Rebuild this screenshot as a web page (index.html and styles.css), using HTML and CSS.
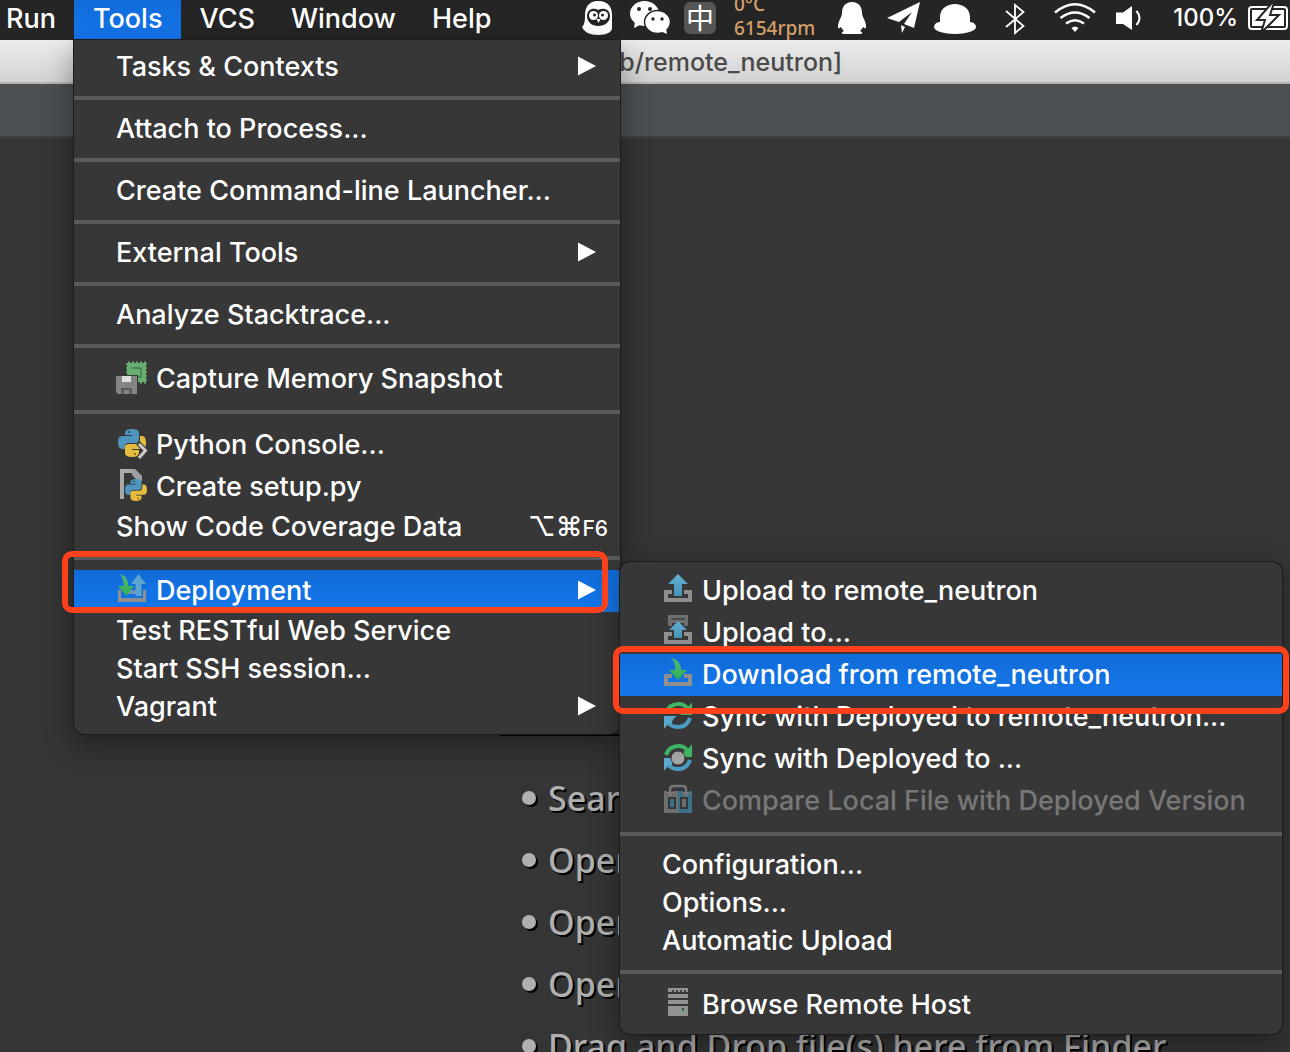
FILE: index.html
```html
<!DOCTYPE html>
<html lang="en">
<head>
<meta charset="utf-8">
<title>remote_neutron</title>
<link rel="stylesheet" href="styles.css">
</head>
<body>
<svg class="defs" aria-hidden="true">
  <defs>
    <linearGradient id="blue" x1="0" y1="0" x2="0" y2="1"><stop offset="0" stop-color="#64b0d2"/><stop offset="1" stop-color="#4592b8"/></linearGradient>
    <linearGradient id="green" x1="0" y1="0" x2="0" y2="1"><stop offset="0" stop-color="#54b878"/><stop offset="1" stop-color="#2faf52"/></linearGradient>
    <symbol id="arrow" viewBox="0 0 18 20"><path d="M0 0.500L18 10L0 19.500Z" fill="#fff"/></symbol>
    <symbol id="tray" viewBox="0 0 32 32"><path d="M2 16H10V20H6V24H26V20H22V16H30V28H2Z" fill="#8f8f8f"/></symbol>
    <symbol id="snake" viewBox="0 0 28 28">
      <path d="M7 4Q7 0 14 0Q21 0 21 4V10Q21 14 17 14H10Q7 14 7 17V20H4Q0 20 0 13Q0 7 4 7H14V6H7Z" fill="#4f94bd"/>
      <path d="M22 7H24Q28 7 28 14Q28 20 24 20H14V21H21V24Q21 28 14 28Q7 28 7 24V18Q7 15 11 15H18Q22 14 22 11Z" fill="#e4bd3e"/>
      <circle cx="11" cy="3" r="1" fill="#24465c"/><circle cx="17" cy="25" r="1" fill="#7a5d10"/>
    </symbol>
    <symbol id="sync" viewBox="0 0 32 32">
      <path d="M4 13Q7 4 17 4Q22 4 25 8" fill="none" stroke="#3fb463" stroke-width="4"/>
      <path d="M30 2V15H18Q22 12 22 9Q27 7 30 2Z" fill="#3fb463"/>
      <path d="M28 18Q25 27 16 27Q11 27 7 24" fill="none" stroke="#4b9cc2" stroke-width="4"/>
      <path d="M2 29V16H15Q10 19 10 23Q5 24 2 29Z" fill="#5aa9cc"/>
    </symbol>
  </defs>
</svg>

<header class="menubar">
  <nav class="menus" aria-label="Application menu">
    <button class="title first">Run</button>
    <div class="menu-root">
      <button class="title active" aria-expanded="true">Tools</button>
      <ul class="menu tools-menu">
        <li><button class="item">Tasks &amp; Contexts<svg class="more"><use href="#arrow"/></svg></button></li>
        <li class="separator"></li>
        <li><button class="item">Attach to Process...</button></li>
        <li class="separator"></li>
        <li><button class="item">Create Command-line Launcher...</button></li>
        <li class="separator"></li>
        <li><button class="item">External Tools<svg class="more"><use href="#arrow"/></svg></button></li>
        <li class="separator"></li>
        <li><button class="item">Analyze Stacktrace...</button></li>
        <li class="separator"></li>
        <li><button class="item with-icon">
          <svg class="icon" viewBox="0 0 32 32"><path d="M11 1H30V20H22V13H11Z" fill="#69ad72"/><path d="M10 2H31M10 6H31M10 10H31M22 14H31M22 18H31" stroke="#69ad72" stroke-width="1.500"/><path d="M12 .500H30M30 20.500H22" stroke="#69ad72" stroke-width="2" stroke-dasharray="2 2"/><path d="M15 6H25V15H22" fill="none" stroke="#3f7f4d" stroke-width="1.500"/><path d="M0 14H21V32H2L0 30Z" fill="#858585"/><path d="M6 14H15V20H6Z" fill="#dedede"/><path d="M5 26H16V32H5Z" fill="#5b5b5b"/><path d="M8 28H13V32H8Z" fill="#858585"/></svg>
          Capture Memory Snapshot</button></li>
        <li class="separator"></li>
        <li><button class="item with-icon">
          <svg class="icon" viewBox="0 0 32 32"><use href="#snake" x="2" y="1" width="28" height="28"/><path d="M22 15L29 22L23 30" fill="none" stroke="#373737" stroke-width="5"/><path d="M23 16L29.500 22.500L23 30" fill="none" stroke="#cdcdcd" stroke-width="3"/></svg>
          Python Console...</button></li>
        <li><button class="item with-icon">
          <svg class="icon" viewBox="0 0 32 32"><path d="M4 -1H18V3H8V29H4Z" fill="#a9a9a9"/><path d="M16 -1H19L26 6V11H22L16 5Z" fill="#a0a0a0"/><use href="#snake" x="9" y="9" width="22" height="22"/></svg>
          Create setup.py</button></li>
        <li><button class="item">Show Code Coverage Data<span class="shortcut">⌥⌘<small>F6</small></span></button></li>
        <li class="separator"></li>
        <li class="has-submenu marked mark-parent">
          <button class="item with-icon selected" aria-expanded="true">
            <svg class="icon" viewBox="0 0 32 32"><path d="M2 16H5V24H27V16H30V28H2Z" fill="#8f8f8f"/><path d="M11 18H22" stroke="#7094b8" stroke-width="4"/><path d="M22.500 0L30 10H25.500V22H19.500V10H15Z" fill="#5ba5cf"/><path d="M4 0Q12 2 12.500 12H18L10.500 22L2 12H7.500Q8 5 4 0Z" fill="url(#green)"/></svg>
            Deployment<svg class="more"><use href="#arrow"/></svg></button>
          <ul class="menu submenu">
            <li><button class="item with-icon">
              <svg class="icon" viewBox="0 0 32 32"><use href="#tray"/><path d="M16 0L26 10H20V22H12V10H6Z" fill="url(#blue)"/></svg>
              Upload to remote_neutron</button></li>
            <li><button class="item with-icon">
              <svg class="icon" viewBox="0 0 32 32"><path d="M6 -1H26V10H22V7H10V10H6Z" fill="#6f6f6f"/><path d="M9 3H23" stroke="#4b4b4b" stroke-width="2"/><use href="#tray"/><path d="M16 5L25 14H20V22H12V14H7Z" fill="url(#blue)"/></svg>
              Upload to...</button></li>
            <li class="marked mark-child"><button class="item with-icon selected">
              <svg class="icon" viewBox="0 0 32 32"><use href="#tray"/><path d="M9 0Q19 2 19 12H25L16 22L7 12H13Q14 5 9 0Z" fill="url(#green)"/></svg>
              Download from remote_neutron</button></li>
            <li><button class="item with-icon">
              <svg class="icon" viewBox="0 0 32 32"><use href="#sync"/></svg>
              Sync with Deployed to remote_neutron...</button></li>
            <li><button class="item with-icon">
              <svg class="icon" viewBox="0 0 32 32"><use href="#sync"/><circle cx="16" cy="16" r="7" fill="#a3a3a3" stroke="#373737"/></svg>
              Sync with Deployed to ...</button></li>
            <li><button class="item with-icon" disabled>
              <svg class="icon" viewBox="0 0 32 32"><path d="M2 7H16V29H2Z" fill="#6f6f6f"/><path d="M16 7H30V29H16Z" fill="#3d7188"/><path d="M6 13H14V25H6ZM18 13H26V25H18Z" fill="#373737"/><path d="M8 15H12V23H8Z" fill="#3d7188"/><path d="M20 15H24V23H20Z" fill="#6f6f6f"/><path d="M8 11V5Q8 2 12 2H20Q24 2 24 5V11" fill="none" stroke="#373737" stroke-width="6"/><path d="M8 10V5Q8 2 12 2H20Q24 2 24 5V10" fill="none" stroke="#777" stroke-width="2.500"/><path d="M3 8H13L8 13ZM19 8H29L24 13Z" fill="#777"/></svg>
              Compare Local File with Deployed Version</button></li>
            <li class="separator"></li>
            <li><button class="item">Configuration...</button></li>
            <li><button class="item">Options...</button></li>
            <li><button class="item">Automatic Upload</button></li>
            <li class="separator"></li>
            <li><button class="item with-icon">
              <svg class="icon" viewBox="0 0 32 32"><path d="M6 0H26V4H6ZM6 6H26V10H6ZM6 12H26V16H6ZM6 18H26V28H6Z" fill="#929292"/><path d="M10 3H24" stroke="#444" stroke-width="2" stroke-dasharray="2 2"/><path d="M20 20H22V22H20Z" fill="#444"/><path d="M20 22H22V24H20Z" fill="#22b84c"/></svg>
              Browse Remote Host</button></li>
          </ul>
        </li>
        <li><button class="item">Test RESTful Web Service</button></li>
        <li><button class="item">Start SSH session...</button></li>
        <li><button class="item">Vagrant<svg class="more"><use href="#arrow"/></svg></button></li>
      </ul>
    </div>
    <button class="title">VCS</button>
    <button class="title">Window</button>
    <button class="title">Help</button>
  </nav>
  <div class="status">
    <svg width="46" height="40" viewBox="576 0 46 40"><path d="M598 1C588 1 585 8 585 16C585 22 584 25 582 27C584 32 590 35 598 35C607 35 612 32 612 28V15C612 7 608 1 598 1Z" fill="#fff"/><path d="M598 10C594 7 587 9 587 16C587 22 592 26 598 26C605 26 610 22 610 16C610 9 603 7 598 10Z" fill="#222"/><circle cx="593.500" cy="15.500" r="4.500" fill="#fff"/><circle cx="603.500" cy="15.500" r="4.500" fill="#fff"/><circle cx="594.500" cy="15" r="1.500" fill="#222"/><circle cx="602.500" cy="15" r="1.500" fill="#222"/><path d="M596.500 19H600.500L598.500 23Z" fill="#fff"/></svg>
    <svg width="54" height="40" viewBox="622 0 54 40"><ellipse cx="644.500" cy="13.500" rx="14.500" ry="12.500" fill="#fff"/><path d="M635 22L634 28L642 24Z" fill="#fff"/><ellipse cx="657.500" cy="22" rx="13" ry="11.500" fill="#fff" stroke="#252525" stroke-width="1.500"/><path d="M660 31L667 34L666 28Z" fill="#fff"/><g fill="#252525"><circle cx="639" cy="9" r="2"/><circle cx="650" cy="9" r="2"/><circle cx="653" cy="19" r="1.700"/><circle cx="662" cy="19" r="1.700"/></g></svg>
    <span class="input-method">中</span>
    <span class="sensors">0°C<br>6154rpm</span>
    <svg width="50" height="40" viewBox="826 0 50 40"><path d="M852 2C845 2 842 7 842 13C842 17 838 21 838 26C838 29 839 29 841 27C842 29 843 30 844 31C841 32 841 34 844 34H860C863 34 863 32 860 31C861 30 862 29 863 27C865 29 866 29 866 26C866 21 862 17 862 13C862 7 859 2 852 2Z" fill="#fff"/></svg>
    <svg width="50" height="40" viewBox="876 0 50 40"><path d="M887 18L920 2L914 28L904 24L912 12L899 22ZM901 25L905 27L902 33Z" fill="#fff"/></svg>
    <svg width="60" height="40" viewBox="926 0 60 40"><path d="M940 22V17C940 9 947 4 955 4C963 4 970 9 970 17V22C974 22 976 25 976 27C976 31 966 34 955 34C944 34 934 31 934 27C934 25 936 22 940 22Z" fill="#fff"/></svg>
    <svg width="60" height="40" viewBox="986 0 60 40"><path d="M1006 11L1023.500 26L1015 33V5L1023.500 12L1006 27" fill="none" stroke="#fff" stroke-width="1.800"/></svg>
    <svg width="60" height="40" viewBox="1046 0 60 40"><g fill="none" stroke="#fff" stroke-width="2.600"><path d="M1055 12.500Q1075 -4 1095 12.500M1060.500 18Q1075 7 1089.500 18M1066 23.500Q1075 17 1084 23.500"/></g><path d="M1071.500 28Q1075 25 1078.500 28L1075 32Z" fill="#fff"/></svg>
    <svg width="60" height="40" viewBox="1106 0 60 40"><path d="M1116 12.500H1123L1132 6V30L1123 24H1116Z" fill="#fff"/><path d="M1136.500 11Q1142.500 18 1136.500 25" fill="none" stroke="#fff" stroke-width="2"/></svg>
    <span class="charge">100%</span>
    <svg width="44" height="40" viewBox="1246 0 44 40"><rect x="1249" y="7" width="38" height="22" rx="3" fill="none" stroke="#fff" stroke-width="2"/><rect x="1252" y="10" width="32" height="16" fill="#fff"/><path d="M1272 3L1257 20H1265L1261 33L1279 15H1270L1274 3Z" fill="#fff" stroke="#252525" stroke-width="2"/></svg>
  </div>
</header>

<div class="window-title">b/remote_neutron]</div>
<div class="toolbar"></div>
<main class="editor">
  <ul class="hints">
    <li>Search</li>
    <li>Open</li>
    <li>Open</li>
    <li>Open</li>
    <li>Drag and Drop file(s) here from Finder</li>
  </ul>
</main>
</body>
</html>
```

FILE: styles.css
```css
* { box-sizing: border-box; }

body {
  margin: 0;
  height: 100vh;
  display: flex;
  flex-direction: column;
  overflow: hidden;
  background: #353535;
  font-family: Inter, "Liberation Sans", sans-serif;
  font-size: 27px;
  font-weight: 500;
  color: #fff;
}

ul { margin: 0; padding: 0; list-style: none; }

button {
  border: 0;
  margin: 0;
  background: none;
  color: inherit;
  font: inherit;
  white-space: nowrap;
}

.defs { position: absolute; width: 0; height: 0; }

/* Menu bar */
.menubar {
  display: flex;
  flex: none;
  justify-content: space-between;
  height: 40px;
  background: #252525;
}
.menus { display: flex; }
.menu-root { position: relative; }
.title { height: 40px; padding: 0 18px 4px; }
.title.first { padding-left: 6px; }
.title.active { padding: 0 19px 4px; background: linear-gradient(#116bd8, #1477f0); }

.status { display: flex; flex: none; }
.status svg { flex: none; }
.input-method {
  width: 32px;
  height: 32px;
  margin: 2px 8px;
  border-radius: 6px;
  background: #555;
  font: 28px/30px "Noto Sans CJK SC", sans-serif;
  text-align: center;
}
.sensors {
  display: flex;
  flex-direction: column;
  justify-content: flex-end;
  width: 102px;
  height: 40px;
  padding-left: 10px;
  overflow: hidden;
  color: #d3a068;
  font: 500 19px/24px "Noto Sans", sans-serif;
}
.charge { width: 80px; padding-right: 8px; font-size: 24px; line-height: 36px; text-align: right; }

/* Drop-down menus */
.menu {
  position: absolute;
  padding: 8px 0;
  background: #373737;
  box-shadow: 0 0 0 1px #1c1c1c, 0 10px 30px rgba(0, 0, 0, 0.4);
}
.tools-menu { top: 40px; left: 0; width: 546px; border-radius: 0 0 10px 10px; z-index: 1; }
.submenu { top: -8px; left: 100%; width: 662px; border-radius: 10px; }

.item {
  display: flex;
  align-items: center;
  width: 100%;
  height: 38px;
  padding: 0 12px 2px 42px;
  text-align: left;
}
.with-icon { height: 42px; gap: 8px; }
.selected { background: linear-gradient(#116bd8, #1477ea); }
.item:disabled { color: #777; }
.icon { flex: none; width: 32px; height: 32px; overflow: visible; }
.more { width: 18px; height: 20px; margin: 0 12px 0 auto; }
.shortcut { margin-left: auto; font-family: Inter, "DejaVu Sans", sans-serif; }
.shortcut small { font-size: 21px; }
.separator { height: 24px; padding: 10px 0; background: #5a5a5a content-box; }

/* Red call-outs drawn round the highlighted entries */
.has-submenu, .marked { position: relative; }
.marked::after {
  content: "";
  position: absolute;
  border: 6px solid #ff411c;
  border-radius: 10px;
  pointer-events: none;
}
.mark-parent::after { inset: -19px 12px -1px -12px; }
.mark-child::after { inset: -8px -7px -18px; }

/* Window behind the menus */
.window-title {
  flex: none;
  height: 44px;
  padding-left: 48%;
  border-bottom: 2px solid #b4b4b4;
  background: linear-gradient(#ececec, #d2d2d2);
  color: #4a4a4a;
  font-size: 25px;
  line-height: 44px;
}
.toolbar { flex: none; height: 54px; border-bottom: 2px solid #404040; background: #4b4f52; }
.editor { flex: 1; min-height: 0; padding: 596px 8px 0 500px; }
.hints {
  padding: 32px 0 0 22px;
  border-top: 2px solid #000;
  color: #b0b0b0;
  font: 500 34px/60px "Noto Sans", sans-serif;
  text-shadow: 2px 2px #000;
  white-space: nowrap;
}
.hints li { display: flex; align-items: center; gap: 12px; padding-bottom: 2px; }
.hints li::before {
  content: "";
  width: 14px;
  height: 14px;
  border-radius: 50%;
  background: #b0b0b0;
  box-shadow: 2px 2px #000;
}
```
